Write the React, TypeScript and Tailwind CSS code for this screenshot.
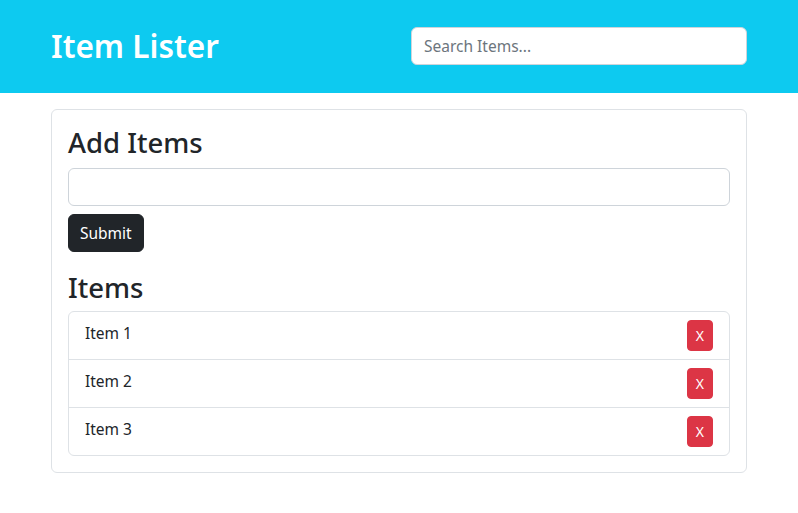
const items = ["Item 1", "Item 2", "Item 3"];

export default function App() {
  return (
    <div className="min-h-[513px] bg-white text-[#212529] font-['Noto_Sans','Open_Sans',sans-serif] text-base leading-6">
      <header className="bg-[#0dcaf0] h-[93px] flex items-center pb-[2px]">
        <div className="w-[720px] mx-auto px-3 flex items-center">
          <h1 className="w-[348px] text-[31.5px] leading-[1.2] font-semibold text-white">Item Lister</h1>
          <div className="flex-1 pl-[12px]">
            <input
              type="text"
              placeholder="Search Items..."
              className="w-full h-[38px] px-3 bg-white border border-[#ced4da] rounded-[6px] text-[15.5px] placeholder:text-[#6c757d] outline-none"
            />
          </div>
        </div>
      </header>

      <main className="w-[720px] mx-auto px-3 mt-4">
        <div className="border border-[#dee2e6] rounded-[6px] p-4">
          <h2 className="text-[27.5px] leading-[1.24] font-medium mb-2">Add Items</h2>
          <form onSubmit={(e) => e.preventDefault()}>
            <input
              type="text"
              className="block w-full h-[38px] px-3 bg-white border border-[#ced4da] rounded-[6px] outline-none"
            />
            <button
              type="submit"
              className="mt-2 h-[38px] px-[11px] bg-[#212529] text-white text-[15.5px] rounded-[6px] border border-[#212529]"
            >
              Submit
            </button>
          </form>

          <h2 className="text-[27.5px] leading-[1.24] font-medium mt-[19px] mb-[6px]">Items</h2>
          <ul className="border border-[#dee2e6] rounded-[6px]">
            {items.map((item, i) => (
              <li
                key={item}
                className={`flex justify-between items-start px-4 py-2 text-[15.5px] ${i > 0 ? "border-t border-[#dee2e6]" : ""}`}
              >
                <span className="pt-[1px]">{item}</span>
                <button className="bg-[#dc3545] text-white text-sm leading-[1.5] px-2 py-1 rounded-[4px] border border-[#dc3545]">
                  X
                </button>
              </li>
            ))}
          </ul>
        </div>
      </main>
    </div>
  );
}
